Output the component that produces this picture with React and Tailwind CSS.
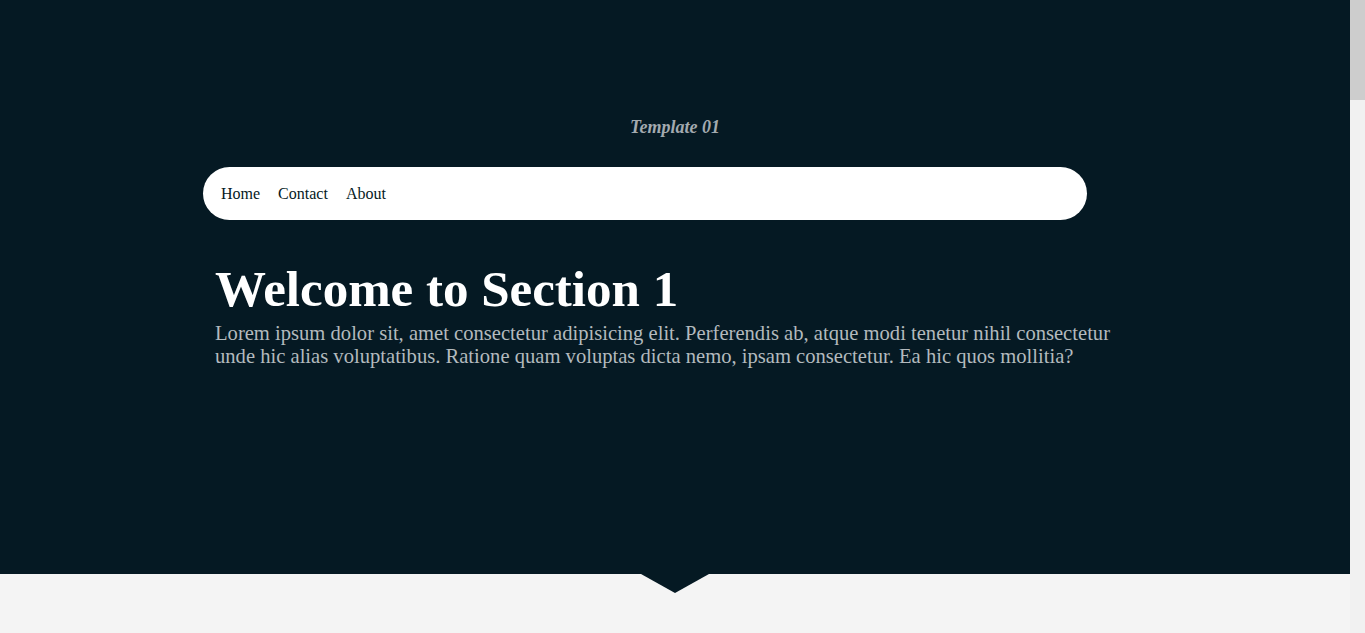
import React from 'react';

const links = ['Home', 'Contact', 'About'];

const Triangle = () => (
  <div className="absolute left-1/2 top-full -translate-x-1/2 w-0 h-0 border-l-[34px] border-r-[34px] border-t-[19px] border-l-transparent border-r-transparent border-t-[#051923] z-10" />
);

export default function App() {
  return (
    <div className="h-screen flex font-['Liberation_Serif',serif]">
      <main className="w-[1350px] h-full overflow-hidden">
        {/* Hero */}
        <section className="relative h-[574px] bg-[#051923]">
          <div className="pt-[114px] text-center">
            <h1 className="text-[18px] italic font-bold text-[#a3aaaf]">Template 01</h1>
          </div>
          <nav className="mt-[26px] ml-[203px] w-[884px] h-[53px] bg-white rounded-full flex items-center gap-[18px] px-[18px]">
            {links.map((l) => (
              <a key={l} href="#" className="text-[16px] text-[#051923]">
                {l}
              </a>
            ))}
          </nav>
          <div className="mt-[39px] ml-[215px] w-[905px]">
            <h2 className="text-[51px] font-bold text-white leading-[60px]">Welcome to Section 1</h2>
            <p className="mt-[3px] text-[20.6px] leading-[23px] text-[#b3babe]">
              Lorem ipsum dolor sit, amet consectetur adipisicing elit. Perferendis ab, atque modi tenetur nihil consectetur
              unde hic alias voluptatibus. Ratione quam voluptas dicta nemo, ipsam consectetur. Ea hic quos mollitia?
            </p>
          </div>
          <Triangle />
        </section>

        <section className="h-[574px] bg-[#f4f4f4]" />
      </main>

      {/* scrollbar */}
      <div className="w-[15px] h-full bg-[#f1f1f1]">
        <div className="h-[100px] bg-[#cdcdcd]" />
      </div>
    </div>
  );
}
